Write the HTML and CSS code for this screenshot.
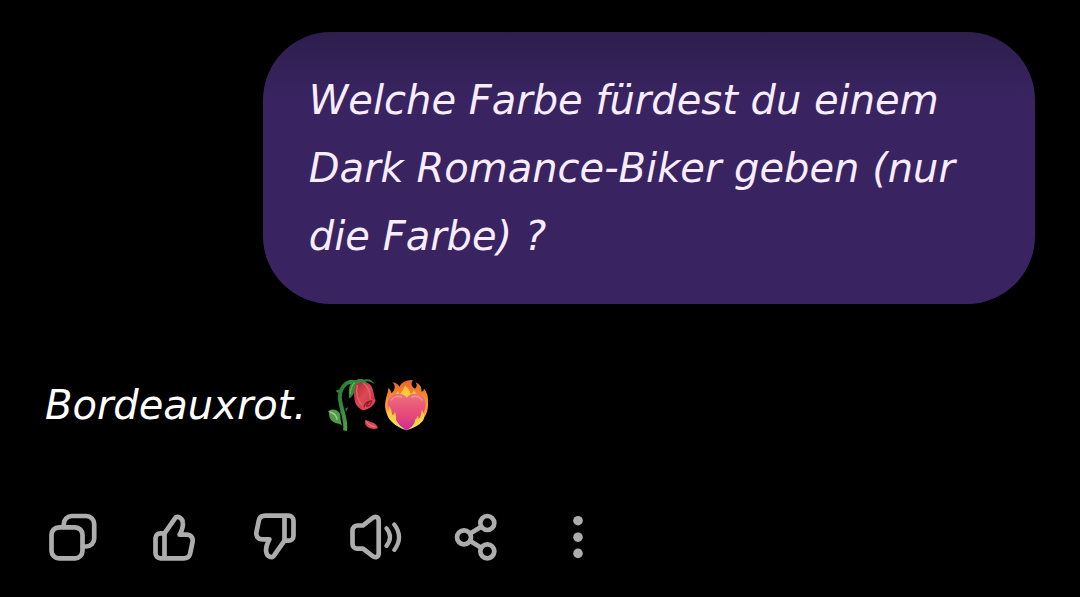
FILE: index.html
```html
<!DOCTYPE html>
<html lang="de">
<head>
<meta charset="utf-8">
<meta name="viewport" content="width=device-width, initial-scale=1">
<title>Chat</title>
<link rel="stylesheet" href="styles.css">
</head>
<body>
<main class="chat">
  <p class="bubble">Welche Farbe fürdest du einem Dark Romance-Biker geben (nur die Farbe) ?</p>
  <article class="answer">
    <p class="reply">
      <span>Bordeauxrot.</span>
      <span class="emojis">
        <svg class="emoji" viewBox="18 30 156 156" role="img" aria-label="Verwelkte Rose">
          <defs>
            <linearGradient id="stem" x1="0" y1="0" x2="1" y2="1"><stop offset="0" stop-color="#1f7a35"/><stop offset="1" stop-color="#64ad51"/></linearGradient>
            <linearGradient id="petal" x1="0" y1="0" x2="1" y2="1"><stop offset="0" stop-color="#a91f35"/><stop offset=".5" stop-color="#dc4a57"/><stop offset="1" stop-color="#b32334"/></linearGradient>
          </defs>
          <path d="M75 185C83 145 46 92 65 60C77 38 94 34 111 43" fill="none" stroke="url(#stem)" stroke-width="12"/>
          <path d="M55 73l-8-8 12-4zM68 128l-7-3 1 10zM76 119l9-5-7 15z" fill="#39843d"/>
          <path d="M68 172C58 160 48 168 34 154C24 143 30 132 24 127C34 118 52 119 59 133C64 145 58 152 68 172Z" fill="#4f9b49"/>
          <path d="M29 129Q48 133 52 152" fill="none" stroke="#9bd080" stroke-width="5"/>
          <path d="M104 45C113 32 136 34 149 46C162 57 159 75 167 94C163 111 146 120 128 124C111 114 105 105 103 86C101 69 96 56 104 45Z" fill="url(#petal)"/>
          <path d="M112 48C107 71 112 95 130 113M130 42C147 55 151 72 151 91" fill="none" stroke="#e8646b" stroke-width="4"/>
          <path d="M128 100Q148 84 166 94Q159 119 128 124Q120 112 128 100Z" fill="#d84b55"/>
          <path d="M132 115Q135 96 155 96Q154 110 140 111Q141 101 149 101" fill="none" stroke="#9b192b" stroke-width="4"/>
          <path d="M108 34C90 36 83 59 88 89Q106 76 107 47L123 38L142 47L136 37Q153 34 164 47Q155 27 132 32Q119 26 108 34Z" fill="#36883b"/>
          <path d="M104 40Q91 54 91 75" fill="none" stroke="#6dae57" stroke-width="4"/>
          <path d="M136 153Q146 155 152 159Q169 161 174 178Q151 184 140 172Q133 164 136 153Z" fill="#db4655"/>
          <path d="M139 157Q146 170 166 174" fill="none" stroke="#f28485" stroke-width="3"/>
        </svg>
        <svg class="emoji" viewBox="183 30 156 156" role="img" aria-label="Brennendes Herz">
          <defs>
            <linearGradient id="flame" x1="0" y1="0" x2="0" y2="1"><stop offset="0" stop-color="#e7662c"/><stop offset=".5" stop-color="#ff9830"/><stop offset="1" stop-color="#ffc02e"/></linearGradient>
            <linearGradient id="heart" x1="0" y1="0" x2="0" y2="1"><stop offset="0" stop-color="#f0707a"/><stop offset=".6" stop-color="#e5487a"/><stop offset="1" stop-color="#c22ca0"/></linearGradient>
            <linearGradient id="glow" x1="0" y1="0" x2="0" y2="1"><stop offset="0" stop-color="#ffbd2c"/><stop offset="1" stop-color="#ffe057"/></linearGradient>
          </defs>
          <path d="M260 184C222 172 190 142 196 98C198 83 204 73 205 57Q213 62 214 72Q224 67 224 52Q224 44 217 39Q233 42 238 53Q249 31 279 33Q270 46 279 55Q286 63 289 54Q292 48 287 40Q305 47 305 68Q312 66 312 59Q326 73 324 103C326 145 294 174 260 184Z" fill="url(#flame)"/>
          <path d="M222 82Q230 75 233 65Q239 73 238 78Q248 68 255 50Q270 60 272 78Q278 75 281 64Q288 77 300 84L260 110Z" fill="url(#glow)"/>
          <path d="M260 184C236 170 202 140 203 105C204 69 249 67 260 86C272 67 317 70 317 106C317 140 284 170 260 184Z" fill="url(#heart)"/>
          <path d="M214 93Q226 78 245 84M275 84Q294 77 306 93" fill="none" stroke="#f79297" stroke-width="4" stroke-linecap="round"/>
          <path d="M254 181C224 170 197 147 203 128Q208 119 206 110Q217 122 216 139Q225 134 225 128Q230 140 228 152Q236 169 254 181ZM267 180Q286 166 285 152Q293 148 293 140Q297 145 296 151Q305 139 305 122Q318 141 309 155Q292 174 267 180Z" fill="url(#glow)"/>
        </svg>
      </span>
    </p>
    <div class="actions">
      <button class="action" type="button" aria-label="Kopieren">
        <svg class="icon" viewBox="0 0 56 56"><rect x="6.5" y="18.3" width="31" height="31" rx="7.5"/><path d="M18.8 18v-3a8 8 0 0 1 8-8h14.4a8 8 0 0 1 8 8v14.5a8 8 0 0 1-8 8H38"/></svg>
      </button>
      <button class="action" type="button" aria-label="Gute Antwort">
        <svg class="icon" viewBox="0 0 56 56"><path id="thumb" d="M18.5 24.3h-4a5 5 0 0 0-5 5v15a5 5 0 0 0 5 5h23.2c3.8 0 5.7-1.5 6.4-4.5l2.4-11.5c.9-4.7-1.6-7.6-6-7.6h-6.9c2-3.7 3.7-9.1 3.2-12.4-.5-4.7-5.8-7.5-8.3-3.2L18.5 24.3v25"/></svg>
      </button>
      <button class="action" type="button" aria-label="Schlechte Antwort">
        <svg class="icon" viewBox="0 0 56 56"><use href="#thumb" transform="rotate(180 28 28)"/></svg>
      </button>
      <button class="action" type="button" aria-label="Vorlesen">
        <svg class="icon" viewBox="0 0 56 56"><path d="M9.5 16.5H15L24.5 9c3.2-2.5 6.2-.7 6.2 3v32c0 3.7-3 5.5-6.2 3L15 39.7H9.5a5 5 0 0 1-5-5V21.5a5 5 0 0 1 5-5Z"/><path d="M38.5 19.3q7 8.7 0 17.6M46.3 15.5q9.5 12.7 0 25.4" stroke-width="4.2"/></svg>
      </button>
      <button class="action" type="button" aria-label="Teilen">
        <svg class="icon" viewBox="0 0 56 56"><circle cx="15" cy="28.3" r="7"/><circle cx="38.3" cy="14" r="7"/><circle cx="38.3" cy="42.3" r="7"/><path d="m21.2 24.5 11-6.8M21.2 32l11 6.7"/></svg>
      </button>
      <button class="action" type="button" aria-label="Weitere Optionen">
        <svg class="icon dots" viewBox="0 0 56 56"><circle cx="28" cy="11.7" r="4.8"/><circle cx="28" cy="28.2" r="4.8"/><circle cx="28" cy="44.4" r="4.8"/></svg>
      </button>
    </div>
  </article>
</main>
</body>
</html>
```
FILE: styles.css
```css
* {
  box-sizing: border-box;
}

body {
  margin: 0;
  background: #000;
  color: #fff;
  font-family: "DejaVu Sans", sans-serif;
  font-size: 40px;
  font-style: italic;
  line-height: 68px;
}

.chat {
  display: flex;
  flex-direction: column;
  gap: 67px;
  padding: 32px 45px;
}

.bubble {
  align-self: flex-end;
  width: 78%;
  margin: 0;
  padding: 34px 46px;
  border-radius: 68px;
  background: linear-gradient(#2d1e4d, #392461 68px);
  color: #f7edff;
}

.answer {
  display: flex;
  flex-direction: column;
  gap: 70px;
}

.reply {
  display: flex;
  flex-wrap: wrap;
  align-items: center;
  gap: 20px;
  margin: 0;
}

.emojis {
  display: flex;
  gap: 3px;
}

.emoji {
  width: 52px;
  height: 52px;
}

.actions {
  display: flex;
  flex-wrap: wrap;
  gap: 45px;
}

.action {
  display: flex;
  padding: 0;
  border: 0;
  background: none;
  color: #adadad;
  cursor: pointer;
}

.icon {
  width: 56px;
  height: 56px;
  fill: none;
  stroke: currentColor;
  stroke-width: 4.7;
  stroke-linecap: round;
  stroke-linejoin: round;
}

.dots {
  fill: currentColor;
  stroke: none;
}
```
